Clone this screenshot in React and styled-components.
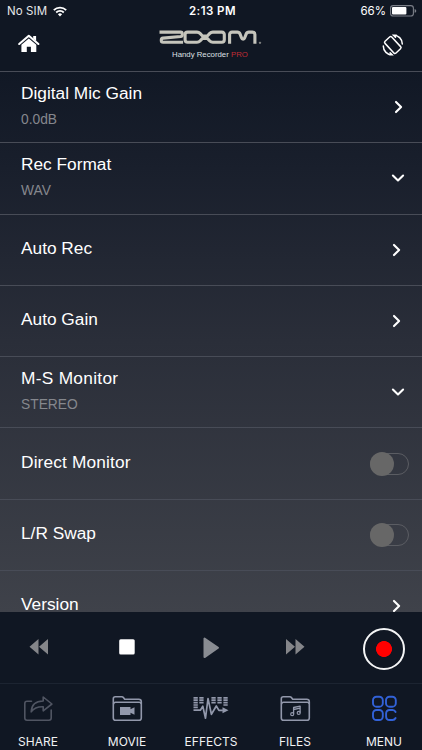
import React, { useState } from "react";
import styled, { createGlobalStyle } from "styled-components";

const settings = [
  { title: "Digital Mic Gain", value: "0.0dB", control: "right", inset: 16 },
  { title: "Rec Format", value: "WAV", control: "down" },
  { title: "Auto Rec", control: "right", inset: 18 },
  { title: "Auto Gain", control: "right", inset: 18 },
  { title: "M-S Monitor", value: "STEREO", control: "down", spacing: 0.3 },
  { title: "Direct Monitor", control: "switch", spacing: 0.15 },
  { title: "L/R Swap", control: "switch" },
  { title: "Version", control: "right", inset: 18 },
];

const WifiIcon = () => (
  <svg width="14" height="11" viewBox="0 0 14 11" fill="none" stroke="#fff" strokeWidth="1.8">
    <path d="M.8 4.1a9 9 0 0 1 12.4 0" />
    <path d="M3.2 6.5a5.4 5.4 0 0 1 7.6 0" />
    <path d="M7 10.5 4.9 8.3a3 3 0 0 1 4.2 0z" fill="#fff" stroke="none" />
  </svg>
);

const BatteryIcon = () => (
  <svg width="27" height="12" viewBox="0 0 27 12">
    <rect x=".6" y=".6" width="22.8" height="10.4" rx="2.6" fill="none" stroke="#7b7f88" strokeWidth="1.1" />
    <rect x="2" y="2" width="14.4" height="7.6" rx="1" fill="#fff" />
    <path d="M24.6 4v3.8q1.7-.5 1.7-1.9t-1.7-1.9" fill="#7b7f88" />
  </svg>
);

const HomeIcon = () => (
  <svg width="22" height="19" viewBox="0 0 22 19">
    <path d="M1.2 10 10.8 1.8 20.4 10" fill="none" stroke="#fff" strokeWidth="2.1" strokeLinecap="round" strokeLinejoin="round" />
    <path d="M15.2 2h2.9v5l-2.9-2.4z" fill="#fff" />
    <path d="M3.4 10.8 10.8 4.6l7.5 6.2v7.3h-5.4v-5.4H8.800v5.400H3.400z" fill="#fff" />
  </svg>
);

const RotateIcon = () => (
  <svg width="22" height="22" viewBox="0 0 22 22" fill="none" stroke="#fff" strokeWidth="1.5" strokeLinecap="round">
    <rect x="6.2" y="3" width="9.2" height="16" rx="1.5" transform="rotate(-43 10.8 11)" />
    <path d="M11.3 1.2c5-.2 9 3.7 9 8.8M14.3 1.2l-2.800 0 2 2.100" />
    <path d="M10.3 20.8c-5 .2-9-3.700-9-8.800M7.300 20.800l2.800 0-2-2.100" />
  </svg>
);

const BrandLogo = () => (
  <svg width="104" height="15" viewBox="0 0 104 15" fill="none" stroke="#c5c5bc" strokeWidth="3.1" strokeLinejoin="round">
    <path d="M.5 2.1h21q1.8 0 1.8 1.8v.8q0 1.6-1.7 1.8L4 8.1q-1.7.2-1.7 1.9v.6q0 1.7 1.8 1.7h20" />
    <path d="M43.500 6 41 3.400Q39.800 2.100 38 2.100h-9.400q-2.500 0-2.500 2.500v5.200q0 2.500 2.500 2.500H38q1.800 0 3-1.300l2.500-2.600h4.800l2.500 2.600q1.200 1.300 3 1.300h9q2.500 0 2.500-2.500V4.600q0-2.500-2.500-2.500h-9q-1.800 0-3 1.300L48.300 6z" />
    <path d="M70.600 13.800V4.600q0-2.500 2.500-2.500h5.200q2 0 2.700 1.800l1.500 3.900q.4 1.300 1.600 1.300t1.600-1.300l1.500-3.900q.7-1.800 2.700-1.800h3.500q2.500 0 2.500 2.500v9.200" />
    <circle cx="101" cy="12.8" r=".7" strokeWidth=".7" />
  </svg>
);

const Chevron = ({ down }) => (
  <svg width="14" height="14" viewBox="0 0 14 14" fill="none" stroke="#fff" strokeWidth="2.1" strokeLinecap="round" strokeLinejoin="round">
    <path d={down ? "M1.9 4.5 7 9.4l5.1-4.900" : "M4 1.900 9.100 7 4 12.100"} />
  </svg>
);

const Folder = ({ children }) => (
  <svg width="31" height="27" viewBox="0 0 31 27" fill="none" stroke="#9298ab" strokeWidth="1.6" strokeLinejoin="round">
    <path d="M1.3 23V3.7q0-2 2-2h6.4q1.2 0 1.9 1l1.1 1.6h14q2.600 0 2.600 2.500V23q0 2.300-2.300 2.300H3.600q-2.300 0-2.300-2.300z" />
    <path d="M1.5 9q.3-1.7 2-1.7h23.7q1.8 0 2 1.7" />
    {children}
  </svg>
);

const ShareIcon = () => (
  <svg width="31" height="27" viewBox="0 0 31 27" fill="none" stroke="#505562" strokeWidth="1.6" strokeLinejoin="round" strokeLinecap="round">
    <path d="M8.5 6.2H4q-2.2 0-2.2 2.2v14.7q0 2.200 2.200 2.200h22q2.200 0 2.200-2.200v-8" />
    <path d="M8.2 16.8q.5-10.600 12-10.800V2l8.700 7-8.700 6.800v-4Q12 11.500 8.200 16.800z" />
  </svg>
);

const EffectsIcon = () => (
  <svg width="36" height="27" viewBox="0 0 36 27" fill="none" stroke="#9298ab">
    <path strokeWidth="1.7" d="M.5 2.800h4.300M.5 5.200h4.300M.5 7.600h4.300M.5 10h4.300M.5 12.400h4.300M6.300 2.800h4.300M6.300 5.200h4.300M6.300 7.600h4.300M18.400 2.800h4.300M18.400 5.200h4.300M18.400 7.600h4.300M24.400 2.800h4.300M24.400 5.200h4.300M24.400 7.600h4.300M30.400 2.800h4.300M30.400 5.200h4.300M30.400 7.600h4.300M30.400 10h4.300" />
    <path strokeWidth="1.7" strokeLinejoin="round" d="M.5 15.200h6.800l2.500-4 2.700 12L15 3.500l3.400 15.800 4.900-8.300 2.600 4.400h4" />
    <path d="m29.500 12.300 6 3-6 3z" fill="#9298ab" stroke="none" />
  </svg>
);

const MenuIcon = () => (
  <svg width="27" height="27" viewBox="0 0 27 27" fill="none" stroke="#3262d8" strokeWidth="1.9" strokeLinecap="round">
    <rect x="2" y="1.7" width="9.8" height="10" rx="3.5" />
    <rect x="15" y="1.7" width="9.8" height="10" rx="3.5" />
    <rect x="2" y="15" width="9.8" height="10" rx="3.5" />
    <path d="M24.6 17q-1-2-3-2h-3q-3.500 0-3.500 3.500v3q0 3.500 3.500 3.500h3q2 0 3-2" />
  </svg>
);

const tabs = [
  { label: "SHARE", icon: <ShareIcon /> },
  {
    label: "MOVIE",
    icon: (
      <Folder>
        <path d="M8 12h10.5v2.300l4-2v7.400l-4-2V20H8z" fill="#9298ab" stroke="none" />
      </Folder>
    ),
  },
  { label: "EFFECTS", icon: <EffectsIcon /> },
  {
    label: "FILES",
    icon: (
      <Folder>
        <path d="M13.6 19v-6.500l6.500-1.300v6.500M13.600 14.500l6.500-1.300" strokeWidth="1.3" />
        <circle cx="12.2" cy="19.2" r="1.5" strokeWidth="1.2" />
        <circle cx="18.7" cy="17.9" r="1.5" strokeWidth="1.2" />
      </Folder>
    ),
  },
  { label: "MENU", icon: <MenuIcon /> },
];

const App = () => {
  const [switches, setSwitches] = useState({});

  const toggle = (title) => setSwitches({ ...switches, [title]: !switches[title] });

  return (
    <Screen>
      <GlobalStyle />
      <StatusBar>
        <Carrier>
          No SIM <WifiIcon />
        </Carrier>
        <Clock>2:13 PM</Clock>
        <Battery>
          66% <BatteryIcon />
        </Battery>
      </StatusBar>

      <Header>
        <HomeIcon />
        <Brand>
          <BrandLogo />
          <p>
            Handy Recorder <span>PRO</span>
          </p>
        </Brand>
        <RotateIcon />
      </Header>

      <Settings>
        {settings.map((item) => (
          <Row key={item.title} $inset={item.inset}>
            <div>
              <Title $paired={!!item.value} $spacing={item.spacing}>
                {item.title}
              </Title>
              {item.value && <Value>{item.value}</Value>}
            </div>
            {item.control === "switch" ? (
              <Switch
                role="switch"
                aria-checked={!!switches[item.title]}
                $on={switches[item.title]}
                onClick={() => toggle(item.title)}
              />
            ) : (
              <Chevron down={item.control === "down"} />
            )}
          </Row>
        ))}
      </Settings>

      <Transport>
        <RewindIcon width="20" height="16" viewBox="0 0 20 16">
          <path d="M9.5 0v15.4L.5 7.700zM19 0v15.400l-9-7.700z" />
        </RewindIcon>
        <svg width="16" height="16" viewBox="0 0 16 16">
          <rect x=".2" y=".2" width="15.5" height="15.2" rx="1.5" fill="#fff" />
        </svg>
        <PlayIcon width="18" height="22" viewBox="0 0 18 22">
          <path d="M2.5 1.500v18.600L16 10.800z" strokeWidth="2" strokeLinejoin="round" />
        </PlayIcon>
        <svg width="20" height="16" viewBox="0 0 20 16" fill="#85868a">
          <path d="M1 0v15.400l9-7.700zM10.500 0v15.400l9-7.700z" />
        </svg>
        <RecordButton />
      </Transport>

      <TabBar>
        {tabs.map((tab) => (
          <Tab key={tab.label}>
            {tab.icon}
            <span>{tab.label}</span>
          </Tab>
        ))}
      </TabBar>
    </Screen>
  );
};

export default App;


const GlobalStyle = createGlobalStyle`
  * {
    box-sizing: border-box;
  }

  body {
    margin: 0;
    background: #101723;
  }

  svg {
    display: block;
    flex-shrink: 0;
  }
`;

const Screen = styled.div`
  width: 422px;
  height: 750px;
  display: flex;
  flex-direction: column;
  overflow: hidden;
  background: #101723;
  color: #fff;
  font-family: "Liberation Sans", Arial, sans-serif;
`;

const StatusBar = styled.div`
  height: 22px;
  display: grid;
  grid-template-columns: 1fr auto 1fr;
  align-items: center;
  padding: 0 5px 0 7px;
  font-family: Inter, sans-serif;
  font-size: 11.5px;
  line-height: 22px;
`;

const Carrier = styled.div`
  display: flex;
  align-items: center;
  gap: 6px;
  color: #e6e7ea;
  letter-spacing: 0.1px;
`;

const Clock = styled.div`
  padding-left: 1px;
  font-weight: 600;
  letter-spacing: 0.45px;
`;

const Battery = styled.div`
  display: flex;
  align-items: center;
  justify-content: flex-end;
  gap: 4px;
`;

const Header = styled.header`
  height: 49px;
  display: flex;
  align-items: flex-start;
  justify-content: space-between;
  padding: 7px 18px 0;

  > svg {
    margin-top: 5px;
  }
`;

const Brand = styled.div`
  padding-top: 1px;

  p {
    margin: 5px 0 0 13px;
    font-size: 7.8px;
    line-height: 9px;
    white-space: nowrap;
    color: #dfe0e4;
  }

  span {
    color: #c12c35;
  }
`;

const Settings = styled.main`
  height: 541px;
  overflow: hidden;
  background: linear-gradient(#111825, #191f2c 18%, #2a2e39 50%, #3f424a);
`;

const Row = styled.div`
  height: 71.3px;
  display: flex;
  align-items: center;
  justify-content: space-between;
  padding: 0 ${(props) => props.$inset || 17}px 0 21px;
  border-top: 1px solid #484c57;
`;

const Title = styled.div`
  font-size: 17.3px;
  line-height: 26px;
  letter-spacing: ${(props) => props.$spacing || 0}px;
  margin-top: ${(props) => (props.$paired ? -2 : -4)}px;
`;

const Value = styled.div`
  font-size: 13.8px;
  line-height: 27px;
  color: #85878d;
`;

const Switch = styled.button`
  position: relative;
  width: 39px;
  height: 22px;
  margin-right: -4px;
  padding: 0;
  border: 1px solid #5b5d63;
  border-radius: 11px;
  background: transparent;

  &::before {
    content: "";
    position: absolute;
    top: -2px;
    left: ${(props) => (props.$on ? 14 : -1)}px;
    width: 24px;
    height: 24px;
    border-radius: 50%;
    background: #676767;
  }
`;

const Transport = styled.div`
  height: 72px;
  display: grid;
  grid-template-columns: 76px 102px 66px 102px 76px;
  align-items: center;
  justify-items: center;
  padding-bottom: 1px;
  border-bottom: 1px solid #1c2431;
`;

const RewindIcon = styled.svg`
  margin-left: 1px;
  fill: #85868a;
`;

const PlayIcon = styled.svg`
  margin-top: 2px;
  fill: #898c92;
  stroke: #898c92;
`;

const RecordButton = styled.button`
  width: 42px;
  height: 42px;
  margin-top: 3px;
  padding: 0;
  border: 2px solid #f4f5f6;
  border-radius: 50%;
  background: radial-gradient(circle, #f00 7.6px, transparent 8.3px);
`;

const TabBar = styled.nav`
  flex: 1;
  display: grid;
  grid-template-columns: 76px 102px 66px 102px 76px;
  padding-top: 11px;
`;

const Tab = styled.div`
  display: flex;
  flex-direction: column;
  align-items: center;
  gap: 12px;

  span {
    font-family: Inter, sans-serif;
    font-size: 12px;
    line-height: 15px;
    color: #f1f2f4;
  }
`;
